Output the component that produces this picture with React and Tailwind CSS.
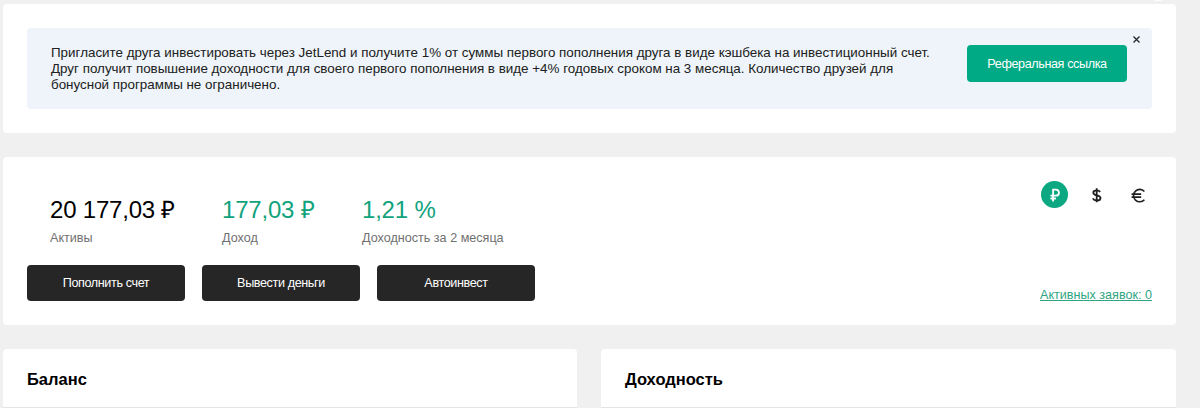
import React, { useState } from 'react';

const stats = [
  { value: '20 177,03 ₽', label: 'Активы', box: 'w-[172px] text-black' },
  { value: '177,03 ₽', label: 'Доход', box: 'w-[140px] text-[#10a37c]' },
  { value: '1,21 %', label: 'Доходность за 2 месяца', box: 'w-[160px] text-[#10a37c]' },
];

const actions = ['Пополнить счет', 'Вывести деньги', 'Автоинвест'];

const RubleIcon = () => (
  <svg width="27" height="27" viewBox="0 0 27 27" fill="none" stroke="currentColor" strokeWidth="1.8">
    <path d="M12.1 20.4V8.6h2.8a3 3 0 0 1 0 6.1H9.5M9.5 17.5h5.4" />
  </svg>
);

const DollarIcon = () => (
  <svg width="27" height="27" viewBox="0 0 27 27" fill="none" stroke="currentColor" strokeWidth="1.8">
    <path d="M17.1 11c-.6-1.1-1.9-1.7-3.4-1.7-2.1 0-3.4.9-3.4 2.4 0 3.5 7.2 1.7 7.2 5.2 0 1.6-1.5 2.6-3.6 2.6-1.9 0-3.4-.8-4.1-2.1M13.7 7.3v14" />
  </svg>
);

const EuroIcon = () => (
  <svg width="27" height="27" viewBox="0 0 27 27" fill="none" stroke="currentColor" strokeWidth="1.6">
    <path d="M19.4 10.5a6.2 6.2 0 1 0 0 8.2M6.6 13.1h9.6M6.6 16.1h9.6" />
  </svg>
);

const currencies = [
  { id: 'rub', Icon: RubleIcon },
  { id: 'usd', Icon: DollarIcon },
  { id: 'eur', Icon: EuroIcon },
];

const Invite = () => (
  <section className="h-[129px] rounded bg-white px-6 pt-6">
    <div className="relative flex h-[81px] items-start justify-between rounded bg-[#eef4f9] pl-6 pr-[25px] pt-[17px]">
      <p className="whitespace-nowrap text-[13.4px] leading-4 text-[#202020]">
        Пригласите друга инвестировать через JetLend и получите 1% от суммы первого пополнения друга в виде кэшбека на инвестиционный счет.
        <br />
        Друг получит повышение доходности для своего первого пополнения в виде +4% годовых сроком на 3 месяца. Количество друзей для
        <br />
        бонусной программы не ограничено.
      </p>
      <button className="h-[37px] w-[160px] rounded bg-[#00aa84] pt-px text-[12.6px] tracking-[-0.38px] text-white">
        Реферальная ссылка
      </button>
      <button className="absolute right-3 top-2 text-[#202020]">
        <svg width="7" height="7" viewBox="0 0 7 7" stroke="currentColor" strokeWidth="1.2">
          <path d="M.5.5l6 6M6.5.5l-6 6" />
        </svg>
      </button>
    </div>
  </section>
);

const Summary = () => {
  const [currency, setCurrency] = useState('rub');

  return (
    <section className="flex h-[168px] justify-between rounded bg-white px-6">
      <div className="pt-[38px]">
        <div className="flex pl-[23px]">
          {stats.map((s) => (
            <div key={s.label} className={s.box}>
              <div className="whitespace-nowrap text-[24px] leading-[30px] tracking-[-0.2px]">{s.value}</div>
              <div className="whitespace-nowrap pt-[5px] text-[12.6px] leading-4 text-[#707070]">{s.label}</div>
            </div>
          ))}
        </div>
        <div className="mt-[19px] flex gap-[17px]">
          {actions.map((a) => (
            <button key={a} className="h-9 w-[158px] rounded bg-[#262626] text-[12.6px] tracking-[-0.38px] text-white">
              {a}
            </button>
          ))}
        </div>
      </div>

      <div className="flex flex-col items-end justify-between pb-[22px] pt-6">
        <div className="flex gap-[15px]">
          {currencies.map(({ id, Icon }) => (
            <button
              key={id}
              onClick={() => setCurrency(id)}
              className={`h-[27px] w-[27px] rounded-full ${currency === id ? 'bg-[#0ba882] text-white' : 'text-[#202020]'}`}
            >
              <Icon />
            </button>
          ))}
        </div>
        <a href="#orders" className="text-[12.6px] leading-4 text-[#2fa583] underline">
          Активных заявок: 0
        </a>
      </div>
    </section>
  );
};

const Panel = ({ title }) => (
  <section className="h-[58px] rounded-t bg-white px-6 pt-[18px] shadow-[0_1px_0_#e4e4e4]">
    <h2 className="text-[16.5px] font-bold leading-6 text-black">{title}</h2>
  </section>
);

export default function App() {
  return (
    <div className="relative h-[408px] overflow-hidden bg-[#f0f0f0] pl-[3px] pr-6 pt-1 font-['Liberation_Sans',Arial,sans-serif]">
      {/* bottom edge of the round header button */}
      <div className="absolute right-[30px] -top-[23px] h-6 w-6 rounded-full bg-white" />
      <div className="flex flex-col gap-6">
        <Invite />
        <Summary />
        <div className="grid grid-cols-[574px_1fr] gap-6">
          <Panel title="Баланс" />
          <Panel title="Доходность" />
        </div>
      </div>
    </div>
  );
}
